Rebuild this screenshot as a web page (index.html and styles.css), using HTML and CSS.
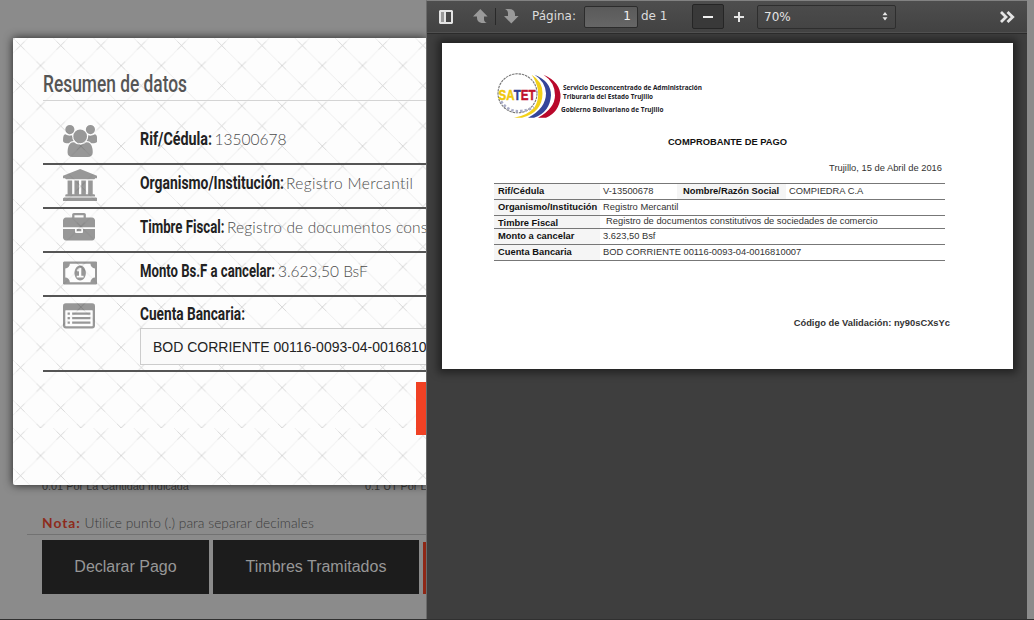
FILE: index.html
```html
<!DOCTYPE html>
<html lang="es">
<head>
<meta charset="utf-8">
<title>Resumen de datos</title>
<link rel="stylesheet" href="styles.css">
</head>
<body>
<main class="page">
  <div class="rates"><span>0.01 Por La Cantidad Indicada</span><span>0.1 UT Por La Cantidad</span></div>
  <p class="note"><b>Nota:</b> <span>Utilice punto (.) para separar decimales</span></p>
  <div class="actions">
    <a class="btn declare">Declarar Pago</a>
    <a class="btn stamps">Timbres Tramitados</a>
    <a class="btn danger"></a>
  </div>
</main>

<section class="modal">
  <svg class="lattice" width="414" height="447">
    <defs>
      <pattern id="net" width="40.25" height="40.25" patternUnits="userSpaceOnUse">
        <path d="M-1-1L41.25 41.25M-2 17L17-2M13.25 42.25L42.25 13.25" fill="none" stroke="#e9e9e9" stroke-width=".8"/>
        <path d="M3.500 3.500L11.500 11.500M3.500 11.500L11.500 3.500M23.600 23.600L31.600 31.600M23.600 31.600L31.600 23.600" fill="none" stroke="#d2d2d2" stroke-width=".8"/>
      </pattern>
    </defs>
    <rect width="414" height="390" fill="url(#net)"/>
    <g transform="translate(0 390)"><rect width="414" height="57" fill="url(#net)"/></g>
  </svg>
  <div class="modal-body">
    <h2><svg width="146" height="34"><text x="0" y="25.300" textLength="144" lengthAdjust="spacingAndGlyphs">Resumen de datos</text></svg></h2>
    <div class="row">
      <svg class="icon" viewBox="64 0 1920 1792" width="34.3" height="32"><path d="M657 896q-162 5-265 128h-134q-82 0-138-40.5t-56-118.5q0-353 124-353 6 0 43.5 21t97.5 42.5 119 21.5q67 0 133-23-5 37-5 66 0 139 81 256zm1071 637q0 120-73 189.5t-194 69.5h-874q-121 0-194-69.5t-73-189.5q0-53 3.5-103.5t14-109 26.5-108.5 43-97.5 62-81 85.5-53.5 111.5-20q10 0 43 21.5t73 48 107 48 135 21.5 135-21.5 107-48 73-48 43-21.5q61 0 111.5 20t85.5 53.5 62 81 43 97.5 26.5 108.5 14 109 3.5 103.5zm-1024-1277q0 106-75 181t-181 75-181-75-75-181 75-181 181-75 181 75 75 181zm704 384q0 159-112.5 271.5t-271.5 112.5-271.5-112.5-112.5-271.5 112.5-271.5 271.5-112.5 271.5 112.5 112.5 271.5zm576 225q0 78-56 118.5t-138 40.5h-134q-103-123-265-128 81-117 81-256 0-29-5-66 66 23 133 23 59 0 119-21.5t97.5-42.5 43.5-21q124 0 124 353zm-128-609q0 106-75 181t-181 75-181-75-75-181 75-181 181-75 181 75 75 181z"/></svg>
      <svg class="label" width="74.500" height="30"><text y="23.500" textLength="72" lengthAdjust="spacingAndGlyphs">Rif/Cédula:</text></svg>
      <span class="value">13500678</span>
    </div>
    <div class="row">
      <svg class="icon" viewBox="0 0 1920 1792" width="34.3" height="32"><path d="M960 0l960 384v128h-128q0 26-20.5 45t-48.5 19h-1526q-28 0-48.5-19t-20.5-45h-128v-128zm-704 640h256v768h128v-768h256v768h128v-768h256v768h128v-768h256v768h59q28 0 48.5 19t20.5 45v64h-1664v-64q0-26 20.5-45t48.5-19h59v-768zm1595 960q28 0 48.5 19t20.5 45v128h-1920v-128q0-26 20.5-45t48.5-19h1782z"/></svg>
      <svg class="label" width="146" height="30"><text y="23.500" textLength="144" lengthAdjust="spacingAndGlyphs">Organismo/Institución:</text></svg>
      <span class="value wide">Registro Mercantil</span>
    </div>
    <div class="row">
      <svg class="icon" viewBox="0 0 1920 1792" width="34.3" height="32"><path d="M640 256h512v-128h-512v128zm1152 640v480q0 66-47 113t-113 47h-1472q-66 0-113-47t-47-113v-480h672v160q0 26 19 45t45 19h320q26 0 45-19t19-45v-160h672zm-768 0v128h-256v-128h256zm768-480v384h-1792v-384q0-66 47-113t113-47h352v-160q0-40 28-68t68-28h576q40 0 68 28t28 68v160h352q66 0 113 47t47 113z"/></svg>
      <svg class="label" width="87" height="30"><text y="23.500" textLength="84.5" lengthAdjust="spacingAndGlyphs">Timbre Fiscal:</text></svg>
      <span class="value long">Registro de documentos constitutivos</span>
    </div>
    <div class="row">
      <svg class="icon" viewBox="0 0 1920 1792" width="34.3" height="32"><path d="M768 1152h384v-96h-128v-448h-114l-148 137 77 80q42-37 55-57h2v288h-128v96zm512-256q0 70-21 142t-59.5 134-101.5 101-138 39-138-39-101.5-101-59.5-134-21-142 21-142 59.5-134 101.5-101 138-39 138 39 101.5 101 59.5 134 21 142zm512 256v-512q-106 0-181-75t-75-181h-1152q0 106-75 181t-181 75v512q106 0 181 75t75 181h1152q0-106 75-181t181-75zm128-832v1152q0 26-19 45t-45 19h-1792q-26 0-45-19t-19-45v-1152q0-26 19-45t45-19h1792q26 0 45 19t19 45z"/></svg>
      <svg class="label" width="138" height="30"><text y="23.500" textLength="135" lengthAdjust="spacingAndGlyphs">Monto Bs.F a cancelar:</text></svg>
      <span class="value">3.623,50 BsF</span>
    </div>
    <div class="row account">
      <svg class="icon" viewBox="0 0 1920 1792" width="34.3" height="32"><path fill-rule="evenodd" d="M160 128h1472q160 0 160 160v1088q0 160-160 160h-1472q-160 0-160-160v-1088q0-160 160-160zM128 544v832q0 32 32 32h1472q32 0 32-32v-832q0-32-32-32h-1472q-32 0-32 32zM256 640h128v128h-128zM256 896h128v128h-128zM256 1152h128v128h-128zM512 640h1024v128h-1024zM512 896h1024v128h-1024zM512 1152h1024v128h-1024z"/></svg>
      <div class="field">
        <svg class="label" width="110" height="30"><text y="23" textLength="105" lengthAdjust="spacingAndGlyphs">Cuenta Bancaria:</text></svg>
        <div class="select">BOD CORRIENTE 00116-0093-04-0016810007</div>
      </div>
    </div>
    <div class="confirm"></div>
  </div>
</section>

<section class="viewer">
  <header class="toolbar">
    <svg class="t-side" width="14" height="14" viewBox="0 0 14 14"><path fill="#e4e4e4" fill-rule="evenodd" d="M1 0h12l1 1v12l-1 1h-12l-1-1v-12zM2 2v10h3v-10zM7 2v10h5v-10z"/><path fill="#999" d="M2 2h3v10h-3z"/></svg>
    <svg class="t-up" width="15" height="15" viewBox="0 0 15 15"><path fill="#9a9a9a" d="M7.3 0L14.6 7.5H11V10Q11 13 14 14H8.500Q4 13 4 9V7.500H0z"/></svg>
    <i class="sep"></i>
    <svg class="t-down" width="15" height="15" viewBox="0 0 15 15"><path fill="#9a9a9a" d="M7.300 14.500L14.600 7H11V5Q10.500 0 5 0H1Q4 1 4 4.500V7H0z"/></svg>
    <span class="t-label">Página:</span>
    <span class="t-page">1</span>
    <span class="t-of">de 1</span>
    <span class="t-minus"><svg width="12" height="2"><path fill="#f0f0f0" d="M1 0h10v2h-10z"/></svg></span>
    <svg class="t-plus" width="10" height="10"><path fill="#e6e6e6" d="M4 0h2v4h4v2h-4v4h-2v-4h-4v-2h4z"/></svg>
    <span class="t-zoom">70%<svg width="6" height="9" viewBox="0 0 6 9"><path fill="#e8e8e8" d="M3 0L5.500 3.200H.5zM3 8.500L.5 5.300h5z"/></svg></span>
    <svg class="t-more" width="15" height="12" viewBox="0 0 15 12"><path fill="none" stroke="#e4e4e4" stroke-width="2.800" d="M1 1L6 6 1 11M7.500 1L12.700 6 7.500 11"/></svg>
  </header>
  <article class="sheet">
    <svg class="brand" width="240" height="52" viewBox="0 .7 240 52">
      <path fill="#f2d018" d="M34.500 2.500Q45.500 9 45.500 21Q45.500 40 25 45.500H17Q31 43 37.500 35Q42 28 41 18Q39 8 34.500 2.500z"/>
      <path fill="#34459a" d="M37.500 2.500Q54 9 54 23Q53 40 37 45.500H31Q49 36 49 21Q48 9 37.500 2.500z"/>
      <path fill="#b9082b" d="M46.500 2.500Q64 10 63.500 25Q62 40 49 45.500H41Q58 36 58 23Q58 10 46.500 2.500z"/>
      <circle cx="20.500" cy="21" r="19.500" fill="none" stroke="#777" stroke-width="1.100" stroke-dasharray="2.500 .8"/>
      <path fill="none" stroke="#a9acc6" stroke-width="2.500" stroke-dasharray="2.500 2" d="M4 29Q15 45 37 35"/>
      <text x="1.500" y="28" textLength="37" lengthAdjust="spacingAndGlyphs" class="logo-word"><tspan fill="#f0c80c" stroke="#f0c80c">SA</tspan><tspan fill="#2f3d93" stroke="#2f3d93">T</tspan><tspan fill="#c0122d" stroke="#c0122d">ET</tspan></text>
      <g class="brand-text">
        <text x="66" y="17.500" textLength="139" lengthAdjust="spacingAndGlyphs">Servicio Desconcentrado de Administración</text>
        <text x="66" y="26.900" textLength="90" lengthAdjust="spacingAndGlyphs">Triburaria del Estado Trujillo</text>
        <text x="64" y="39.600" textLength="102.500" lengthAdjust="spacingAndGlyphs">Gobierno Bolivariano de Trujillo</text>
      </g>
    </svg>
    <h1>COMPROBANTE DE PAGO</h1>
    <p class="date">Trujillo, 15 de Abril de 2016</p>
    <div class="receipt">
      <div class="line r1"><b>Rif/Cédula</b><span>V-13500678</span><b class="second">Nombre/Razón Social</b><span class="company">COMPIEDRA C.A</span></div>
      <div class="line"><b>Organismo/Institución</b><span>Registro Mercantil</span></div>
      <div class="line r3"><b>Timbre Fiscal</b><span>Registro de documentos constitutivos de sociedades de comercio</span></div>
      <div class="line"><b>Monto a cancelar</b><span>3.623,50 Bsf</span></div>
      <div class="line"><b>Cuenta Bancaria</b><span>BOD CORRIENTE 00116-0093-04-0016810007</span></div>
    </div>
    <p class="code">Código de Validación: ny90sCXsYc</p>
  </article>
</section>
</body>
</html>
```
FILE: styles.css
```css
* { box-sizing: border-box; }
body { margin: 0; width: 1034px; height: 620px; overflow: hidden; position: relative; background: #8b8b8b; font-family: "Liberation Sans", Arial, sans-serif; }
p, h1, h2 { margin: 0; font-weight: normal; }

.page { height: 620px; padding: 479px 0 0 27px; border-bottom: 1px solid #303030; }
.rates { display: flex; padding-left: 15px; font-size: 10.880px; line-height: 14px; color: #3c3c3c; white-space: nowrap; }
.rates span:first-child { width: 323px; }
.note { width: 960px; margin-top: 19px; height: 23px; padding-left: 15px; border-bottom: 1px solid #727272; font: 300 13.750px/21px Lato, sans-serif; color: #3c3c3c; font-variant-ligatures: none; }
.note b { color: #8d2b1c; font-weight: 700; letter-spacing: 1px; }
.note span { letter-spacing: .03px; }
.actions { display: flex; gap: 4px; padding: 5px 0 0 15px; }
.btn { height: 54px; background: #1c1c1c; color: #979797; font-size: 16px; line-height: 53px; text-align: center; }
.declare { width: 167px; }
.stamps { width: 206px; }
.danger { width: 80px; height: 52px; margin-top: 2px; background: #8e2716; }

/* dialog over the page */
.modal { position: absolute; left: 13px; top: 38px; width: 414px; height: 447px; overflow: visible; background: #fdfdfd; border-radius: 2px 0 0 2px; box-shadow: 0 0 10px rgba(0,0,0,.75); }
.lattice { position: absolute; left: 0; top: 0; }
.modal-body { position: relative; height: 447px; padding: 29px 0 0 30px; overflow: hidden; }
.modal h2 { height: 34px; margin-bottom: 20px; border-bottom: 1px solid #d4d4d4; fill: #555; font: 500 24px Roboto, sans-serif; }
.row { display: flex; height: 44px; border-bottom: 2px solid #555; white-space: nowrap; }
.row svg { flex: none; }
.icon { margin: 4.300px 42.700px 0 20px; fill: rgba(0,0,0,.4); }
.label, .modal h2 svg { overflow: visible; }
.label { fill: #222; font: 700 18px Roboto, sans-serif; }
.value { font: 300 15.500px/36px Lato, sans-serif; color: #4c4c4c; font-variant-ligatures: none; }
.wide { letter-spacing: .38px; }
.long { letter-spacing: .14px; }
.account { height: 75px; }
.field { width: 400px; }
.field .label { display: block; }
.select { height: 37px; margin-top: 1px; padding-left: 12px; border: 1px solid #ccc; background: #fafafa; color: #222; font-size: 14px; line-height: 36px; }
.confirm { width: 80px; height: 53px; margin: 10px 0 0 373px; background: #f04124; }

/* document window over everything else */
.viewer { position: absolute; left: 426px; top: 0; width: 601px; height: 619px; border-left: 1px solid #6a6a6a; border-top: 1px solid #828282; background: #3e3e3e; overflow: hidden; }
.toolbar { position: relative; display: flex; align-items: center; height: 32px; padding-left: 12px; border-bottom: 1px solid #505050; background: linear-gradient(#4e4e4e, #424242); color: #dcdcdc; font: 12px "DejaVu Sans", sans-serif; box-shadow: 0 1px 0 #2b2b2b; }
.toolbar > * { flex: none; }
.t-up { margin-left: 20px; }
.sep { width: 1px; height: 17px; margin: 0 8px 0 7px; background: #292929; }
.t-label { width: 45px; margin-left: 13px; position: relative; top: -1px; }
.t-page { width: 54px; height: 22px; margin-left: 7px; padding-right: 6px; border: 1px solid #2c2c2c; border-radius: 2px; background: linear-gradient(#5a5a5a, #666); color: #f3f3f3; line-height: 19px; text-align: right; }
.t-of { width: 48px; margin-left: 3px; position: relative; top: -1px; }
.t-minus { display: flex; align-items: center; justify-content: center; width: 32px; height: 25px; margin-left: 3px; border: 1px solid #252525; border-radius: 2px; background: #393939; }
.t-plus { margin-left: 10px; }
.t-zoom { display: flex; align-items: center; justify-content: space-between; width: 139px; height: 24px; margin-left: 13px; padding: 0 7px 0 6px; border: 1px solid #2e2e2e; border-radius: 2px; background: linear-gradient(#4b4b4b, #444); color: #e4e4e4; }
.t-more { margin-left: 104px; }

.sheet { width: 571px; height: 326px; margin: 10px 0 0 15px; padding: 30px 0 0 52px; background: #fff; box-shadow: 0 0 8px 4px rgba(0,0,0,.45); color: #333; font-size: 9.350px; line-height: 12px; white-space: nowrap; }
.brand { display: block; margin-left: 3px; }
.logo-word { font: 700 15px "Liberation Sans", sans-serif; stroke-width: .5px; }
.brand-text { font: 700 7.200px "Open Sans", sans-serif; fill: #1c2228; }
.sheet h1 { width: 467px; margin-top: 11px; color: #111; font-size: 9.350px; font-weight: bold; line-height: 12px; text-align: center; }
.date { width: 448px; margin-top: 14px; text-align: right; }
.receipt { width: 451px; margin-top: 9px; border-top: 1px solid #777; }
.line { display: flex; height: 16px; border-bottom: 1px solid #777; line-height: 15px; }
.line b { width: 106px; padding-left: 4px; background: #f5f5f5; color: #111; }
.line span { padding-left: 3px; }
.r1 span { width: 77px; }
.line .second { width: 109px; padding-left: 6px; }
.r3 { height: 13px; line-height: 14px; }
.r3 span { padding-left: 6px; line-height: 11px; }
.code { width: 456px; margin-top: 56px; font-weight: bold; text-align: right; }
```
